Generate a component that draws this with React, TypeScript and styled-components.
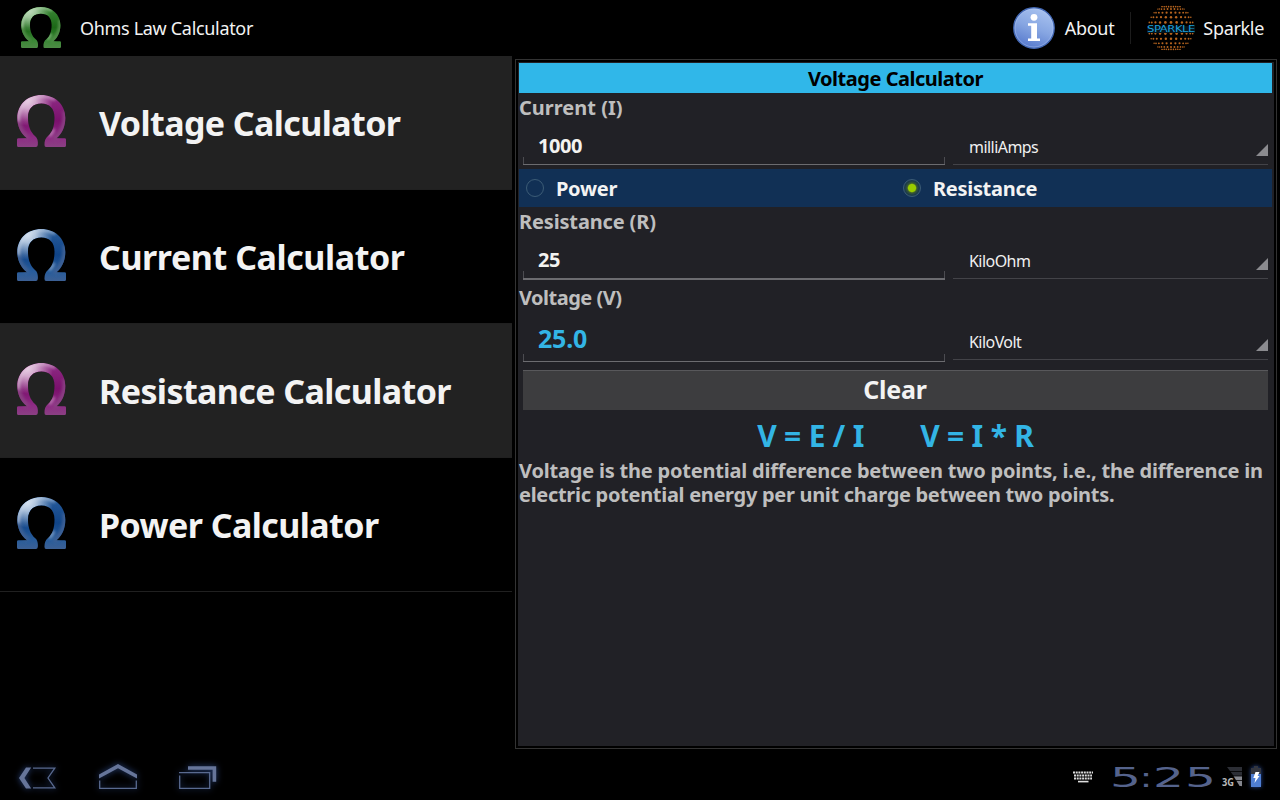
import React, { useState } from 'react';
import styled, { createGlobalStyle } from 'styled-components';

const GlobalStyle = createGlobalStyle`
  * {
    box-sizing: border-box;
  }
  body {
    margin: 0;
    background: #000;
    color: #f3f3f3;
    font-family: 'Noto Sans', sans-serif;
    overflow: hidden;
  }
`;

// Styled components
const Screen = styled.div`
  width: 1280px;
  height: 800px;
  display: flex;
  flex-direction: column;
  background: #000;
`;

const ActionBar = styled.header`
  height: 56px;
  flex: none;
  display: flex;
  align-items: center;
  padding: 0 16px 0 21px;
  font-size: 18px;
  letter-spacing: -0.32px;
`;

const AppLogo = styled.span`
  display: flex;
  padding-bottom: 2px;
`;

const AppTitle = styled.h1`
  flex: 1;
  margin: 0 0 0 19px;
  font-size: 18px;
  font-weight: 400;
`;

const ActionItem = styled.button<{ $gap: number }>`
  height: 56px;
  display: flex;
  align-items: center;
  gap: ${(p) => p.$gap}px;
  padding: 0;
  border: 0;
  background: none;
  color: inherit;
  font: inherit;
  letter-spacing: inherit;
`;

const ActionDivider = styled.span`
  width: 1px;
  height: 32px;
  margin: 0 16px 0 16px;
  background: #1c1c1c;
`;

const Body = styled.main`
  flex: 1;
  display: flex;
`;

const CalculatorList = styled.ul`
  width: 512px;
  margin: 0;
  padding: 0;
  list-style: none;
`;

const CalculatorItem = styled.li<{ $active: boolean; $tracking: number }>`
  height: 134px;
  display: flex;
  align-items: center;
  gap: 33px;
  padding: 0 0 4px 17px;
  border-bottom: 1px solid #202020;
  background: ${(p) => (p.$active ? '#222222' : '#000')};
  font-size: 34px;
  font-weight: 700;
  letter-spacing: ${(p) => p.$tracking}px;
`;

const ItemLabel = styled.span`
  padding-top: 5px;
`;

const Panel = styled.section`
  width: 762px;
  height: 690px;
  margin: 3px 0 0 3px;
  padding: 2px;
  border: 1px solid #333333;
`;

const PanelInner = styled.div`
  height: 100%;
  padding: 1px 2px 0 1px;
  background: #212126;
`;

const PanelTitle = styled.h2`
  height: 30px;
  margin: 0;
  background: #30b7e9;
  color: #000;
  font-size: 20px;
  font-weight: 700;
  line-height: 32px;
  letter-spacing: -0.48px;
  text-align: center;
`;

const FieldLabel = styled.div<{ $tracking?: number }>`
  height: 30px;
  color: #bebebe;
  font-size: 20px;
  font-weight: 700;
  line-height: 30px;
  letter-spacing: ${(p) => p.$tracking || 0}px;
`;

const FieldRow = styled.div<{ $height: number }>`
  height: ${(p) => p.$height}px;
  display: flex;
  align-items: flex-start;
  gap: 8px;
  padding: 0 4px;
`;

const EditText = styled.div<{ $height: number; $line?: number; $result?: boolean }>`
  width: 422px;
  height: ${(p) => p.$height}px;
  padding-left: 15px;
  border-bottom: ${(p) => p.$line || 1}px solid #6c6c70;
  background:
    linear-gradient(#4c4c51, #4c4c51) left bottom / 1px 7px no-repeat,
    linear-gradient(#4c4c51, #4c4c51) right bottom / 1px 7px no-repeat;
  color: ${(p) => (p.$result ? '#33b5e5' : '#f3f3f0')};
  font-size: ${(p) => (p.$result ? 25 : 20)}px;
  font-weight: 700;
  line-height: ${(p) => (p.$result ? 50 : 46)}px;
  letter-spacing: ${(p) => (p.$result ? -0.2 : -0.4)}px;
`;

const Spinner = styled.div<{ $height: number }>`
  width: 315px;
  height: ${(p) => p.$height}px;
  display: flex;
  align-items: flex-end;
  justify-content: space-between;
  padding: 0 0 8px 16px;
  border-bottom: 1px solid #434348;
  color: #f0f0f0;
  font-size: 16px;
  line-height: 18px;
  letter-spacing: -0.55px;
`;

const SpinnerArrow = styled.span`
  width: 12px;
  height: 12px;
  background: #8b8b8f;
  clip-path: polygon(100% 0, 100% 100%, 0 100%);
`;

const RadioRow = styled.div`
  height: 38px;
  display: grid;
  grid-template-columns: 377px 1fr;
  align-items: center;
  background: #113055;
`;

const RadioOption = styled.div`
  display: flex;
  align-items: center;
  gap: 12px;
  padding-left: 7px;
  font-size: 20px;
  font-weight: 700;
  line-height: 40px;
  letter-spacing: -0.3px;
`;

const RadioDot = styled.span<{ $checked: boolean }>`
  width: 18px;
  height: 18px;
  margin-top: -2px;
  border: 1px solid #3c5c76;
  border-radius: 50%;
  background: ${(p) =>
    p.$checked ? 'radial-gradient(circle, #99cc00 3.6px, #3b5a32 4.8px, #1c3c4a 7px)' : 'transparent'};
`;

const ClearButton = styled.button`
  width: 745px;
  height: 40px;
  display: block;
  margin: 0 4px;
  padding: 0 1px 2px 0;
  border: 0;
  border-top: 1px solid #58585b;
  background: #3d3d3f;
  color: #f3f3f3;
  font: 700 25px/35px 'Noto Sans', sans-serif;
  letter-spacing: -0.2px;
`;

const Formulas = styled.div`
  display: flex;
  justify-content: center;
  gap: 56px;
  height: 49px;
  color: #33b5e5;
  font-size: 30px;
  font-weight: 700;
  line-height: 51px;
  letter-spacing: -0.2px;
`;

const Description = styled.p`
  margin: 0;
  color: #bebebe;
  font-size: 20px;
  font-weight: 700;
  line-height: 24px;
  letter-spacing: -0.3px;
  white-space: pre-line;

  &::first-line {
    letter-spacing: -0.2px;
  }
`;

const SystemBar = styled.footer`
  height: 51px;
  flex: none;
  display: flex;
  align-items: center;
  justify-content: space-between;
`;

const NavKeys = styled.nav`
  display: flex;
  gap: 30px;
  padding: 7px 0 0 13px;
`;

const StatusArea = styled.div`
  display: flex;
  align-items: center;
  padding: 4px 18px 0 0;
`;

type Tone = 'green' | 'magenta' | 'blue';

const tones: Record<Tone, { light: string; mid: string; deep: string; base: string }> = {
  green: { light: '#b9d8b6', mid: '#3b8836', deep: '#1c6817', base: '#4d8a45' },
  magenta: { light: '#e6cbe2', mid: '#8e2c84', deep: '#7b106d', base: '#8a4083' },
  blue: { light: '#d3e0ef', mid: '#285c9b', deep: '#104488', base: '#3c6094' },
};

const OmegaIcon: React.FC<{ tone: Tone; width: number; height: number }> = ({ tone, width, height }) => {
  const c = tones[tone];
  const id = `omega-${tone}`;
  const shape =
    'M0 44.5 Q0 43.3 1.5 43.3 H10 C3.5 38 .3 31 .3 23 C.3 9 11 0 24.3 0 S48.3 9 48.3 23 C48.3 31 45.5 38 39.5 43.3 H47.5 Q49 43.3 49 44.5 V50.5 Q49 52 47.5 52 H29 Q27.5 52 27.5 50 C27.3 46 28.5 43 31 41 C35.5 37 37.5 31 37.5 22.5 C37.5 13.5 32.5 8.5 24.3 8.5 S11 13.5 11 22.5 C11 31 13.5 37 18 41 C20.5 43 21.2 46 20.8 50 Q20.5 52 19 52 H1.5 Q0 52 0 50.5 Z';
  return (
    <svg width={width} height={height} viewBox="0 0 49 52" preserveAspectRatio="none">
      <defs>
        <radialGradient id={`${id}-shine`} gradientUnits="userSpaceOnUse" cx="11" cy="6" r="25">
          <stop offset="0" stopColor={c.light} />
          <stop offset="0.3" stopColor={c.light} stopOpacity="0.8" />
          <stop offset="1" stopColor={c.light} stopOpacity="0" />
        </radialGradient>
        <linearGradient id={`${id}-body`} gradientUnits="userSpaceOnUse" x1="0" y1="0" x2="0" y2="52">
          <stop offset="0" stopColor={c.mid} />
          <stop offset="0.5" stopColor={c.deep} />
          <stop offset="0.82" stopColor={c.mid} />
          <stop offset="1" stopColor={c.base} />
        </linearGradient>
        <clipPath id={`${id}-clip`}>
          <path d={shape} />
        </clipPath>
        <filter id={`${id}-soft`} x="-50%" y="-50%" width="200%" height="200%">
          <feGaussianBlur stdDeviation="1.5" />
        </filter>
      </defs>
      <path d={shape} fill={`url(#${id}-body)`} />
      <g clipPath={`url(#${id}-clip)`}>
        <path d="M48 16 C49 31 44 39 37 44" fill="none" stroke={c.base} strokeWidth="5" filter={`url(#${id}-soft)`} />
        <path d="M1 16 C0 30 5 39 11 43" fill="none" stroke={c.base} strokeWidth="5" filter={`url(#${id}-soft)`} />
        <path d="M1 26 C1 14 8 2 25 1 Q33 1 38 5" fill="none" stroke={c.light} strokeWidth="3" opacity="0.55" filter={`url(#${id}-soft)`} />
        <path d={shape} fill={`url(#${id}-shine)`} />
        <path d="M37 34 Q35 39 32 41" fill="none" stroke={c.light} strokeWidth="2.5" opacity="0.6" filter={`url(#${id}-soft)`} />
      </g>
    </svg>
  );
};

const InfoIcon = () => (
  <svg width="42" height="42" viewBox="0 0 42 42">
    <defs>
      <linearGradient id="info-fill" x1="0.7" y1="0" x2="0.3" y2="1">
        <stop offset="0" stopColor="#a9c3f0" />
        <stop offset="0.5" stopColor="#87a6e2" />
        <stop offset="1" stopColor="#5578cc" />
      </linearGradient>
    </defs>
    <circle cx="21" cy="21" r="20.2" fill="url(#info-fill)" stroke="#4368b4" strokeWidth="1.4" />
    <circle cx="21" cy="21" r="19" fill="none" stroke="#b6caf2" strokeWidth="0.7" opacity="0.6" />
    <circle cx="21" cy="10.3" r="3.4" fill="#fff" />
    <path d="M15 16.2h9v15.3h3V34H15v-2.5h3.2V18.8H15z" fill="#fff" />
  </svg>
);

const SparkleLogo = () => {
  const dots: React.ReactNode[] = [];
  for (let row = -5; row <= 5; row++) {
    for (let col = -5; col <= 5; col++) {
      // spread the grid over a sphere so the dots crowd at the rim
      const y = 22.5 * Math.sin((row / 5) * 1.25);
      const half = Math.sqrt(Math.max(0, 23.5 * 23.5 - y * y));
      const x = half * Math.sin((col / 5) * 1.25);
      const r = 1.5 - Math.hypot(row, col) * 0.13;
      if (r > 0.5 && row !== 0) {
        dots.push(<circle key={`${row}:${col}`} cx={24 + x} cy={24 + y} r={r} fill="#b8651f" />);
      }
    }
  }
  return (
    <svg width="48" height="48" viewBox="0 0 48 48">
      {dots}
      <rect x="0" y="22" width="48" height="7" fill="#04141c" />
      <text
        x="0"
        y="28.4"
        textLength="48"
        lengthAdjust="spacingAndGlyphs"
        fill="#1e9fd8"
        fontFamily="'DejaVu Sans', sans-serif"
        fontSize="8.2"
      >
        SPARKLE
      </text>
    </svg>
  );
};

const NavGlyph = styled.svg`
  width: 50px;
  height: 36px;
  fill: none;
  stroke: #596a90;
  stroke-width: 1.3;
  filter: drop-shadow(0 0 3px #2b4680);
`;

const BackKey = () => (
  <NavGlyph viewBox="0 0 50 36">
    <path d="M13 7.5h5.2L11.4 18l6.8 10.5H13L6 18z" fill="#66759a" stroke="none" />
    <path d="M20 8.2H41.8L35 18l6.8 9.8H20" />
  </NavGlyph>
);

const HomeKey = () => (
  <NavGlyph viewBox="0 0 50 36">
    <path d="M6 14.6 25 4l19 10.6v3.8L25 8.2 6 18.4z" fill="#66759a" stroke="none" />
    <path d="M6.7 20.5v7.8h36.6v-7.8" />
  </NavGlyph>
);

const RecentKey = () => (
  <NavGlyph viewBox="0 0 50 36">
    <path d="M15 6.2h28.2v15.6h-3.6V9.8H15z" fill="#66759a" stroke="none" />
    <path d="M6 12.6h30.7v15.7H6.7V15.5" />
  </NavGlyph>
);

const KeyboardIcon = () => (
  <svg width="20" height="12" viewBox="0 0 20 12">
    <g fill="none" stroke="#dedede" strokeWidth="2">
      <path d="M0 1.5h20" strokeDasharray="2 .7" />
      <path d="M1 4.5h18" strokeDasharray="2 .7" />
      <path d="M1 7.5h18" strokeDasharray="2 .7" />
      <path d="M5 10.6h10.5" strokeWidth="1.6" />
    </g>
  </svg>
);

const ClockDigits = styled.svg`
  width: 112px;
  height: 40px;
  margin: 0 0 0 16px;
  fill: #55638c;
  font-family: 'DejaVu Sans', sans-serif;
  font-size: 27px;
`;

const Clock = () => (
  <ClockDigits viewBox="0 0 112 40">
    <text x="1" y="30" textLength="31" lengthAdjust="spacingAndGlyphs">5</text>
    <text x="30.5" y="30" textLength="13" lengthAdjust="spacingAndGlyphs">:</text>
    <text x="44" y="30" textLength="31" lengthAdjust="spacingAndGlyphs">2</text>
    <text x="76" y="30" textLength="31" lengthAdjust="spacingAndGlyphs">5</text>
  </ClockDigits>
);

const SignalIcon = () => (
  <svg width="22" height="26" viewBox="0 0 22 26">
    <path d="M6 3h15v20z" fill="#2c2e35" />
    <path d="M12.5 12H21v10h-2.4z" fill="#85878f" />
    <path d="M5 7.5h16M8 12h13M13 16.5h8" stroke="#000" strokeWidth="0.8" />
    <text x="1" y="22" fill="#b9b9b9" fontFamily="'Noto Sans', sans-serif" fontSize="10" fontWeight="700" textLength="12" lengthAdjust="spacingAndGlyphs">
      3G
    </text>
  </svg>
);

const BatteryGlyph = styled.svg`
  width: 12px;
  height: 22px;
  margin-left: 7px;
  filter: drop-shadow(0 0 2px #284a96);
`;

const BatteryIcon = () => (
  <BatteryGlyph viewBox="0 0 12 22">
    <path d="M4 0h4v2h3v6H1V2h3z" fill="#33363f" />
    <rect x="1" y="8" width="10" height="13" fill="#4f7ed2" />
    <path d="M5.5 6h4L7.6 10H9.5L4.5 17l1-5H3.3z" fill="#fff" />
  </BatteryGlyph>
);

interface Calculator {
  name: string;
  tone: Tone;
  tracking: number;
}

const calculators: Calculator[] = [
  { name: 'Voltage Calculator', tone: 'magenta', tracking: -0.6 },
  { name: 'Current Calculator', tone: 'blue', tracking: -0.43 },
  { name: 'Resistance Calculator', tone: 'magenta', tracking: -0.6 },
  { name: 'Power Calculator', tone: 'blue', tracking: -0.58 },
];

const App: React.FC = () => {
  const [mode, setMode] = useState('Resistance');

  return (
    <>
      <GlobalStyle />
      <Screen>
        <ActionBar>
          <AppLogo>
            <OmegaIcon tone="green" width={40} height={41} />
          </AppLogo>
          <AppTitle>Ohms Law Calculator</AppTitle>
          <ActionItem $gap={10}>
            <InfoIcon />
            About
          </ActionItem>
          <ActionDivider />
          <ActionItem $gap={8}>
            <SparkleLogo />
            Sparkle
          </ActionItem>
        </ActionBar>
        <Body>
          <CalculatorList>
            {calculators.map((calc, index) => (
              <CalculatorItem key={calc.name} $active={index % 2 === 0} $tracking={calc.tracking}>
                <OmegaIcon tone={calc.tone} width={49} height={52} />
                <ItemLabel>{calc.name}</ItemLabel>
              </CalculatorItem>
            ))}
          </CalculatorList>
          <Panel>
            <PanelInner>
              <PanelTitle>Voltage Calculator</PanelTitle>
              <FieldLabel>Current (I)</FieldLabel>
              <FieldRow $height={46}>
                <EditText $height={42}>1000</EditText>
                <Spinner $height={42}>
                  milliAmps
                  <SpinnerArrow />
                </Spinner>
              </FieldRow>
              <RadioRow>
                {['Power', 'Resistance'].map((name) => (
                  <RadioOption key={name} onClick={() => setMode(name)}>
                    <RadioDot $checked={mode === name} />
                    {name}
                  </RadioOption>
                ))}
              </RadioRow>
              <FieldLabel $tracking={-0.15}>Resistance (R)</FieldLabel>
              <FieldRow $height={46}>
                <EditText $height={43} $line={2}>25</EditText>
                <Spinner $height={42}>
                  KiloOhm
                  <SpinnerArrow />
                </Spinner>
              </FieldRow>
              <FieldLabel $tracking={-0.5}>Voltage (V)</FieldLabel>
              <FieldRow $height={57}>
                <EditText $height={49} $result>25.0</EditText>
                <Spinner $height={47}>
                  KiloVolt
                  <SpinnerArrow />
                </Spinner>
              </FieldRow>
              <ClearButton>Clear</ClearButton>
              <Formulas>
                <span>V = E / I</span>
                <span>V = I * R</span>
              </Formulas>
              <Description>
                {'Voltage is the potential difference between two points, i.e., the difference in\nelectric potential energy per unit charge between two points.'}
              </Description>
            </PanelInner>
          </Panel>
        </Body>
        <SystemBar>
          <NavKeys>
            <BackKey />
            <HomeKey />
            <RecentKey />
          </NavKeys>
          <StatusArea>
            <KeyboardIcon />
            <Clock />
            <SignalIcon />
            <BatteryIcon />
          </StatusArea>
        </SystemBar>
      </Screen>
    </>
  );
};

export default App;
